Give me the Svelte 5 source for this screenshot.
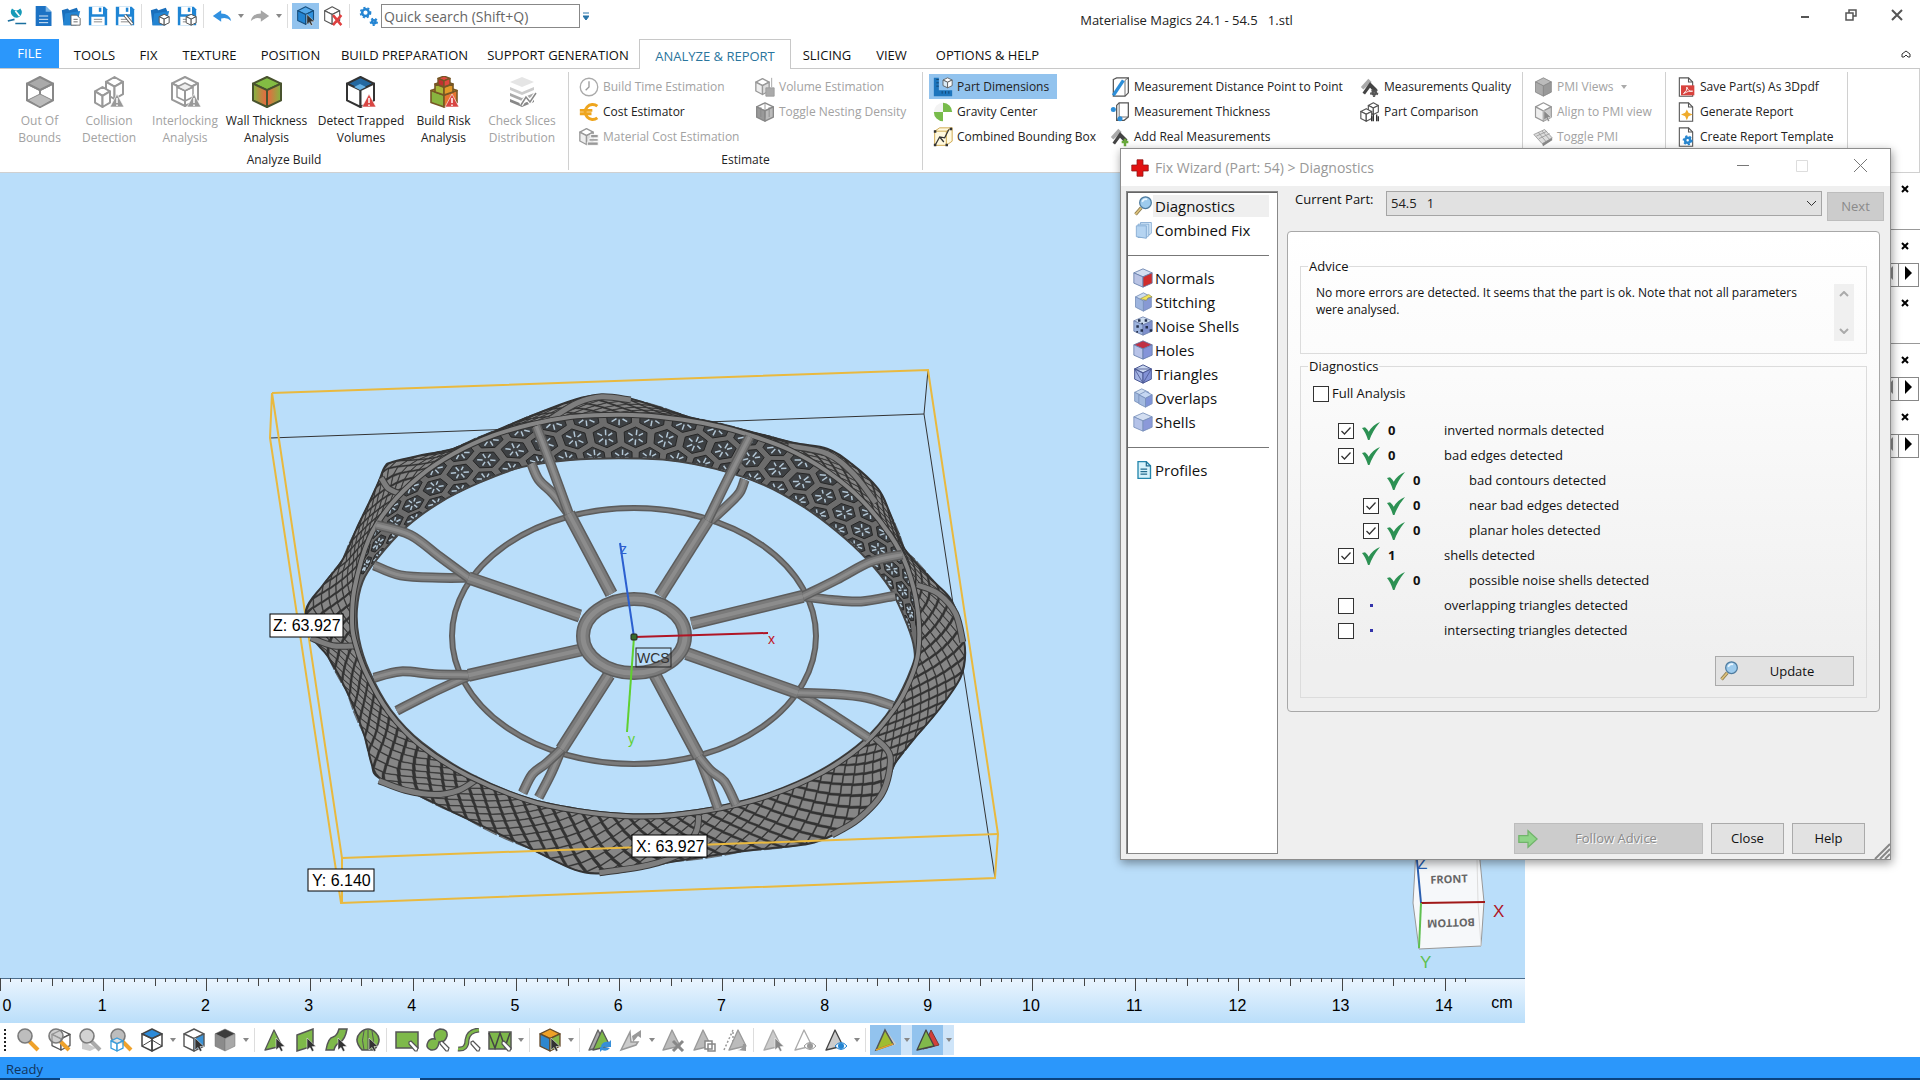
<script lang="ts">
	type Point = [number, number]

	// ---------- icon helpers ----------
	const cube = (x: number, y: number, w: number, h: number, top = '#fff', left = '#fff', right = '#fff', line = '#555', sw = 1.3) => {
		const m = x + w / 2
		const r = x + w
		const a = y + h * 0.22
		const b = y + h * 0.78
		const c = y + h * 0.44
		return `<g stroke="${line}" stroke-width="${sw}" stroke-linejoin="round"><path fill="${top}" d="M${m} ${y}L${r} ${a}L${m} ${c}L${x} ${a}z"/><path fill="${left}" d="M${x} ${a}L${m} ${c}V${y + h}L${x} ${b}z"/><path fill="${right}" d="M${r} ${a}L${m} ${c}V${y + h}L${r} ${b}z"/></g>`
	}
	const tri = (fill: string, line = '#555', dx = 0) =>
		`<path d="M${2 + dx} 22L${11 + dx} 2L${19 + dx} 18z" fill="${fill}" stroke="${line}" stroke-width="1.3" stroke-linejoin="round"/>`
	const cursor = (fill = '#333') => `<path d="M13 10v12l3-2.500 2 4 2-1-2-4h4z" fill="${fill}" stroke="#fff" stroke-width=".5"/>`
	const pen = (line = '#555') => `<path d="M14 14l2-1 7 7-1 3-2 0-6-7z" fill="#fff" stroke="${line}" stroke-width="1.2"/>`
	const warn = (x: number, y: number, fill: string) =>
		`<path d="M${x} ${y}l7 13h-14z" fill="${fill}" stroke="#fff" stroke-width=".6"/><path d="M${x} ${y + 4}v5m0 1.500v1.500" stroke="#fff" stroke-width="1.5"/>`
	const page = (extra: string) =>
		`<path d="M4 1h11l5 5v17H4z" fill="#fff" stroke="#555" stroke-width="1.3"/><path d="M15 1v5h5" fill="none" stroke="#555" stroke-width="1.3"/>${extra}`
	const glass = (fill: string, handle: string) =>
		`<path d="M13 13l9 9" stroke="${handle}" stroke-width="4"/><circle cx="9" cy="8" r="7" fill="${fill}" stroke="#7a7a7a" stroke-width="1.600"/>`
	const floppy = (extra = '') =>
		`<path d="M1 1h19l3 3v19H1z" fill="#1f85d4"/><path d="M5 1h13v9H5zM4 13h16v10H4z" fill="#fff"/><path d="M13 2h3v5h-3z" fill="#1f85d4"/><path d="M7 16h10M7 19h10" stroke="#777"/>${extra}`
	const folder = (extra = '') =>
		`<path d="M1 5l7-2 2 2 9-3 2 5-3 16H3z" fill="#1a6fbc"/><path d="M5 9l18-3-4 17H3z" fill="#2384d2"/>${extra}`
	const gear = (x: number, y: number, r: number, fill: string) =>
		`<circle cx="${x}" cy="${y}" r="${r}" fill="none" stroke="${fill}" stroke-width="3"/><circle cx="${x}" cy="${y}" r="${r + 2}" fill="none" stroke="${fill}" stroke-width="2" stroke-dasharray="2.500 2.500"/>`
	const ruler = '<path d="M1 12L10 2l4 4L4 15z" fill="#aaa"/><path d="M3 19L12 6l9 9-3 4-6-6-6 8z" fill="#444"/>'
	const lens =
		'<path d="M10 14l-7 8" stroke="#8a7a4d" stroke-width="4"/><path d="M10 14l-7 8" stroke="#dcc07b" stroke-width="2"/><circle cx="15" cy="8" r="7" fill="#9dcbed" stroke="#4f7c9f" stroke-width="1.500"/><path d="M11 7q2-4 6-3" fill="none" stroke="#e9f6ff" stroke-width="2"/>'

	const icons: Record<string, string> = {
		logo: '<path d="M6 3q5 5 10 0q4 5-1 10q-5 3-9-2q-3-4 0-8z" fill="#159ab8"/><path d="M10 6l5 6" stroke="#fff" stroke-width="2"/><path d="M1 18l8-2M10 21h13" stroke="#1a6f9f" stroke-width="2"/>',
		new: '<path d="M2 0h12l7 7v17H2z" fill="#1c72c4"/><path d="M14 0v7h7z" fill="#7fb9e8"/><path d="M6 12h11M6 16h11M6 20h11" stroke="#fff"/>',
		open: folder('<path d="M12 11h7l4 4v8H12z" fill="#fff" stroke="#555"/><path d="M15 16h5m-5 3h5" stroke="#555"/>'),
		save: floppy(),
		saveAs: floppy('<path d="M12 11l9 11" stroke="#555" stroke-width="4"/><path d="M12 11l9 11" stroke="#fff" stroke-width="2"/>'),
		openPart: folder(cube(11, 10, 12, 13, '#fff', '#fff', '#fff', '#555', 1.2)),
		savePart: floppy(cube(11, 10, 12, 13, '#fff', '#fff', '#fff', '#555', 1.2)),
		undo: '<path d="M1 12l10-7v4q10 0 12 9q-5-5-12-3v4z" fill="#3191e1"/>',
		redo: '<path d="M23 12L13 5v4Q3 9 1 18q5-5 12-3v4z" fill="#a6a6a6"/>',
		selectPart: cube(2, 1, 19, 21, '#53a8ea', '#2384d2', '#2f91de', '#164e7d') + cursor(),
		unloadPart: cube(2, 1, 18, 21) + '<path d="M12 11l10 12m0-12l-10 12" stroke="#e04040" stroke-width="3"/>',
		gears: gear(9, 8, 4, '#2384d2') + gear(19, 19, 2, '#2384d2'),
		outOf: cube(3, 1, 26, 30, '#aaa', 'none', 'none', '#888', 2) + '<path d="M4 24l12-6 12 6-12 7z" fill="#bbb" stroke="#888"/>',
		collision: cube(13, 1, 17, 22, '#fff', '#fff', '#fff', '#999', 2) + cube(2, 11, 15, 20, '#fff', '#fff', '#fff', '#999', 2) + warn(24, 18, '#999'),
		interlock: cube(3, 1, 26, 29, '#fff', '#fff', '#fff', '#999', 2) + cube(8, 7, 16, 18, '#eee', 'none', 'none', '#999', 1.5) + warn(25, 18, '#999'),
		wall: `<defs><linearGradient id="wl"><stop stop-color="#81b641"/><stop offset="1" stop-color="#ee6540"/></linearGradient><linearGradient id="wr"><stop stop-color="#ee6540"/><stop offset="1" stop-color="#81b641"/></linearGradient></defs>` + cube(2, 1, 28, 30, '#83bd43', 'url(#wl)', 'url(#wr)', '#49532e', 2),
		trapped: cube(2, 1, 27, 30, '#2468a0', '#fff', '#fff', '#333', 2) + '<path d="M15 8l6 3-6 3-6-3z" fill="#66b1e5"/>' + warn(24, 18, '#d84542'),
		risk: cube(3, 10, 26, 21, '#e8ae27', '#89b43f', '#e57531', '#765725', 1.6) + cube(7, 5, 18, 14, '#e8ae27', '#a9b93a', '#e39b29', '#765725', 1.6) + cube(10, 0, 12, 11, '#e04840', '#c03030', '#e04840', '#765725', 1.4) + warn(24, 18, '#d84542'),
		slices: '<path d="M16 1l12 5-12 5L4 6z" fill="#e5e5e5"/><path d="M4 11l12 5 12-5v3l-12 5-12-5z" fill="#ccc"/><path d="M4 17l12 5 12-5v3l-12 5-12-5z" fill="#aaa"/><path d="M4 23l12 5 12-5v3l-12 5-12-5z" fill="#888"/><path d="M15 29l5-8 4 5 6-9" fill="none" stroke="#fff" stroke-width="4"/><path d="M15 29l5-8 4 5 6-9" fill="none" stroke="#888" stroke-width="1.5"/>',
		clock: '<circle cx="12" cy="12" r="10.500" fill="#fff" stroke="#aaa" stroke-width="1.600"/><path d="M12 5v7l-4 4" fill="none" stroke="#999" stroke-width="1.600"/>',
		euro: '<path d="M22 5A9 9 0 1 0 22 19M1 10h15M1 14h14" fill="none" stroke="#eea51d" stroke-width="3.500"/>',
		material: cube(1, 2, 16, 19, '#fff', '#eee', '#ddd', '#999', 1.6) + '<path d="M14 9h9v4h-9zM12 14h11v3H12zM10 18h13v4H10z" fill="#999" stroke="#fff"/>',
		volume: cube(1, 2, 16, 19, '#fff', '#eee', '#ddd', '#999', 1.6) + '<path d="M13 13h10v10H13zM20 1v11" fill="#aaa" stroke="#999"/>',
		nesting: cube(2, 1, 20, 22, '#fff', '#999', '#bbb', '#888', 1.6) + '<path d="M7 6v12m5-16v17m5-13v12" stroke="#888"/>',
		dims: '<path d="M1 1h6v15h16v7H1z" fill="#1d75bd"/><path d="M7 3H4m3 4H4m3 4H4m7 9v-3m4 3v-3m4 3v-3" stroke="#123e66"/>' + cube(12, 1, 11, 12, '#fff', '#d9ebf8', '#fff', '#555', 1),
		gravity: '<path d="M12 12V1A11 11 0 0 0 1 12z" fill="#f3f3f3"/><path d="M12 12V1A11 11 0 0 1 23 12zM12 12v11A11 11 0 0 1 1 12z" fill="#78bb4b"/>',
		bounding: '<path d="M2 5h14v17H2zM2 5l6-4h15v16l-7 5M16 5l7-4" fill="#fff9df" stroke="#c79b35"/><path d="M3 21l5-9 6 1 5-10M8 12l5 6" fill="none" stroke="#333" stroke-width="1.500"/><path d="M1 20h3v3H1zM20 1h3v3h-3zM15 20h3v3h-3zM1 4h3v3H1z" fill="#333"/>',
		distance: '<path d="M4 3l4-2h14v18l-4 4H4z" fill="#fff" stroke="#555" stroke-width="1.500"/><path d="M18 4v19m0-19l4-3" stroke="#555"/><path d="M16 4L4 22" stroke="#2d8ed8" stroke-width="4"/>',
		thickness: '<path d="M8 4l3-3h11v17l-5 4H8z" fill="#fff" stroke="#555" stroke-width="1.500"/><path d="M11 1v17h11M11 18l-3 4" fill="none" stroke="#555"/><circle cx="4" cy="9" r="3" fill="#2d8ed8"/><circle cx="12" cy="20" r="3" fill="#2d8ed8"/>',
		real: ruler + '<path d="M18 23v-9m-4 4h8" stroke="#69aa3b" stroke-width="3"/>',
		quality: ruler + gear(17, 19, 2, '#555'),
		compare: cube(10, 1, 12, 14, '#fff', '#fff', '#fff', '#555', 1.4) + cube(1, 8, 13, 15, '#fff', '#fff', '#fff', '#555', 1.4) + '<path d="M16 15v8m4-8v8m-6-6v6m8-6v6" stroke="#333" stroke-width="1.600"/>',
		pmi: cube(3, 1, 19, 22, '#bbb', '#aaa', '#999', '#888', 1),
		align: cube(3, 1, 19, 22, '#fff', '#eee', '#ccc', '#999', 1.4) + cursor('#888'),
		toggle: '<path d="M1 9l13-6 9 10-12 7z" fill="#ddd" stroke="#999"/><path d="M4 11l13-6M7 14l13-6M6 6l10 12M11 5l9 10" stroke="#999"/><path d="M11 20l12-7v3l-11 7z" fill="#888"/>',
		pdf: page('<path d="M6 10h16v12H6z" fill="#d8433e"/><path d="M9 20q5-4 4-8q2 6 7 5q-5-1-11 3" fill="none" stroke="#fff"/>'),
		report: page('<path d="M13 9l2 4 5 2-5 2-2 5-2-5-5-2 5-2z" fill="#efab2d"/>'),
		template: page(gear(14, 16, 3, '#2786d0')),
		glass: glass('#bdbdbd', '#efa22b'),
		glassPart: cube(5, 2, 18, 20) + glass('#b5b5b5aa', '#efa22b'),
		glassOff: '<path d="M4 13v8l8 2 6-3" fill="#ccc"/>' + glass('#d2d2d2', '#aaa'),
		glassBox: glass('#bdbdbd', '#efa22b') + cube(2, 10, 12, 13, '#fff9', '#fff9', '#fff9', '#3a9ddb', 1.3),
		viewTop: cube(2, 1, 20, 22, '#2c8ad8', 'none', 'none', '#444', 1.5) + '<path d="M2 18l10-6 10 6" fill="none" stroke="#444"/>',
		viewFace: cube(2, 1, 20, 22, '#fff', '#fff', '#3b92d6', '#555', 1.4) + cursor(),
		shade: cube(2, 1, 20, 22, '#3c3c3c', '#8b8b8b', '#a8a8a8', '#777', 0.5),
		markTri: tri('#7eb94a') + cursor(),
		markPlane: '<path d="M3 7l16-6v17L3 23z" fill="#7eb94a" stroke="#555" stroke-width="1.500"/>' + cursor(),
		markSurf: '<path d="M1 22q2-12 7-13q4-1 6-8h8q-2 11-7 13q-5 3-6 8z" fill="#7eb94a" stroke="#555" stroke-width="1.500"/>' + cursor(),
		markShell: '<path d="M6 22Q-3 12 4 5q8-8 16 0q7 7-2 17z" fill="#7eb94a" stroke="#555" stroke-width="1.500"/><path d="M8 22Q5 12 8 3m4 19V2m4 20q3-10 0-19" fill="none" stroke="#555"/>' + cursor(),
		markRect: '<path d="M1 4h22v16H1z" fill="#7eb94a" stroke="#555" stroke-width="1.500"/>' + pen(),
		markBrush: '<path d="M9 11Q6 3 14 1q8 0 7 7q-2 7-8 6q-1 9-8 8q-6-2-3-8q2-4 7-3z" fill="#7eb94a" stroke="#555" stroke-width="1.500"/>' + pen(),
		markLine: '<path d="M1 21q9 1 9-9q1-9 12-10" fill="none" stroke="#555" stroke-width="5"/><path d="M1 21q9 1 9-9q1-9 12-10" fill="none" stroke="#7eb94a" stroke-width="2.500"/>' + pen(),
		markZig: '<path d="M1 4h22v17H1z" fill="#7eb94a" stroke="#555" stroke-width="1.500"/><path d="M1 5l6 15 5-15 5 14 5-14" fill="none" stroke="#444" stroke-width="1.500"/>' + pen(),
		colorCube: cube(2, 1, 20, 22, '#efa127', '#2f87cd', '#85b84b', '#664b2a', 1.3) + cursor(),
		triSwap: tri('#aaa', '#666', -1) + tri('#7eb94a', '#555', 3) + '<path d="M13 18q2-5 8-4l2-2v7h-7l2-2-4 3zM22 20q-3 4-8 2l-2 2v-5" fill="#378fd9"/>',
		triOff: '<path d="M2 22L11 4l1 10 7 0-2 3z" fill="#ccc" stroke="#999" stroke-width="1.500"/><path d="M13 8l9-6v8l-3-2-5 6z" fill="#999"/>',
		triDel: tri('#bbb', '#999') + '<path d="M12 13l10 10m0-10L12 23" stroke="#888" stroke-width="3"/>',
		triCopy: tri('#bbb', '#999') + '<path d="M13 13h7v8h-7zM16 16h7v7h-7z" fill="#fff" stroke="#888" stroke-width="1.500"/>',
		triDup: '<path d="M1 22L10 2v14" fill="none" stroke="#999" stroke-width="1.500" stroke-dasharray="2 2"/>' + tri('#bbb', '#999', 4) + '<path d="M14 22q6 0 6-6h3v7z" fill="#999"/>',
		triSel: tri('#ccc', '#aaa') + cursor('#888'),
		triHide: tri('#fff', '#aaa') + '<path d="M11 18q6-7 12 0q-6 7-12 0z" fill="#fff" stroke="#999"/><circle cx="17" cy="18" r="3" fill="#999"/>',
		triShow: tri('#ccc', '#444') + '<path d="M11 18q6-7 12 0q-6 7-12 0z" fill="#fff" stroke="#2384d2"/><circle cx="17" cy="18" r="3" fill="#2384d2"/>',
		triEdge: '<path d="M12 2l10 14-4 2z" fill="#ccc"/><path d="M2 22L11 2L19 16z" fill="#9fbd31" stroke="#555" stroke-width="1.500"/><path d="M2 22L19 16" stroke="#e5a52b" stroke-width="1.500"/>',
		triBack: '<path d="M7 21L15 2l8 15z" fill="#d33f3a" stroke="#7d3934"/>' + tri('#81b84b', '#444', -1),
		fCombined: '<path d="M9 3h13v13l-3 2H9z" fill="#d8eafb" stroke="#7fa7cf"/><path d="M6 5h13v14l-3 2H6z" fill="#c5dff6" stroke="#7fa7cf"/><path d="M4 7h12v15l-12-2z" fill="#b5d4f1" stroke="#7fa7cf"/>',
		fNormals: cube(1, 1, 22, 22, '#d3def1', '#b9c3e4', '#d02c2c', '#667eab', 1),
		fStitching: cube(3, 1, 19, 22, '#cddcef', '#9db4de', '#8799d4', '#7890ba', 1) + '<path d="M9 8l10-5 4 3-5 1-2 3z" fill="#f2e45b" stroke="#8f8640" stroke-width=".700"/>',
		fNoise: cube(1, 1, 22, 22, '#cddcef', '#9db4de', '#7e90cd', '#7183ad', 1) + '<path d="M6 4h3v3H6zM14 4h3v3h-3zM4 11h3v3H4zM9 16h3v3H9zM15 12h3v3h-3zM20 16h3v3h-3zM10 8h2v2h-2zM4 18h2v2H4z" fill="#24304d"/>',
		fHoles: cube(1, 1, 22, 22, '#c03145', '#b8c3e8', '#8494d9', '#667eab', 1),
		fTriangles: cube(2, 1, 20, 22, '#cbd8f0', '#a4b4e4', '#8292d6', '#4d5a94', 1.2) + '<path d="M2 6l10 17L22 6H2l10 5" fill="none" stroke="#4d5a94"/>',
		fOverlaps: cube(2, 1, 17, 19, '#cddcef', '#a3badf', '#8799d4', '#7890ba', 1) + cube(7, 4, 16, 19, '#c5d7f2', '#a3badf', '#7f93d8', '#7890ba', 1),
		fShells: cube(1, 1, 22, 22, '#d3def1', '#b4c2e8', '#8b99d9', '#7890ba', 1),
		fProfiles: '<path d="M6 2h10l5 5v15H6z" fill="#d6f2fb" stroke="#2486ac" stroke-width="1.600"/><path d="M16 2v5h5M9 11h8M9 14h8M9 17h8" fill="none" stroke="#236b8d" stroke-width="1.500"/>',
		lens,
		cross: '<path d="M8 1h8v7h7v8h-7v7H8v-7H1V8h7z" fill="#e11212" stroke="#8e1515"/>',
		tick: '<path d="M0 8l4-1q3 2 5 6Q14 4 24 0Q14 12 10 24H8Q5 14 0 8z" fill="#2c9153"/>',
		next: '<path d="M1 8h11V2l11 10-11 10v-6H1z" fill="#8fd488" stroke="#71b46b" stroke-width="1.500"/>'
	}

	// ---------- ribbon ----------
	const quickAccess: (string | null)[] = ['logo', 'new', 'open', 'save', 'saveAs', null, 'openPart', 'savePart', null, 'undo', '>', 'redo', '>', null, 'selectPart', 'unloadPart', null, 'gears']

	const tabs = [
		{ name: 'TOOLS', width: 65 },
		{ name: 'FIX', width: 43 },
		{ name: 'TEXTURE', width: 79 },
		{ name: 'POSITION', width: 83 },
		{ name: 'BUILD PREPARATION', width: 145 },
		{ name: 'SUPPORT GENERATION', width: 162 },
		{ name: 'ANALYZE & REPORT', width: 152 },
		{ name: 'SLICING', width: 72 },
		{ name: 'VIEW', width: 57 },
		{ name: 'OPTIONS & HELP', width: 135 }
	]
	let activeTab = $state('ANALYZE & REPORT')

	const analyze = [
		{ icon: 'outOf', lines: ['Out Of', 'Bounds'], width: 57, off: true },
		{ icon: 'collision', lines: ['Collision', 'Detection'], width: 82, off: true },
		{ icon: 'interlock', lines: ['Interlocking', 'Analysis'], width: 70, off: true },
		{ icon: 'wall', lines: ['Wall Thickness', 'Analysis'], width: 93 },
		{ icon: 'trapped', lines: ['Detect Trapped', 'Volumes'], width: 96 },
		{ icon: 'risk', lines: ['Build Risk', 'Analysis'], width: 69 },
		{ icon: 'slices', lines: ['Check Slices', 'Distribution'], width: 88, off: true }
	]

	type Item = { icon: string; text: string; off?: boolean; on?: boolean; menu?: boolean }
	const groups: { label: string; width: number; columns: { width: number; items: Item[] }[] }[] = [
		{
			label: 'Estimate',
			width: 354,
			columns: [
				{
					width: 176,
					items: [
						{ icon: 'clock', text: 'Build Time Estimation', off: true },
						{ icon: 'euro', text: 'Cost Estimator' },
						{ icon: 'material', text: 'Material Cost Estimation', off: true }
					]
				},
				{
					width: 170,
					items: [
						{ icon: 'volume', text: 'Volume Estimation', off: true },
						{ icon: 'nesting', text: 'Toggle Nesting Density', off: true }
					]
				}
			]
		},
		{
			label: '',
			width: 600,
			columns: [
				{
					width: 177,
					items: [
						{ icon: 'dims', text: 'Part Dimensions', on: true },
						{ icon: 'gravity', text: 'Gravity Center' },
						{ icon: 'bounding', text: 'Combined Bounding Box' }
					]
				},
				{
					width: 250,
					items: [
						{ icon: 'distance', text: 'Measurement Distance Point to Point' },
						{ icon: 'thickness', text: 'Measurement Thickness' },
						{ icon: 'real', text: 'Add Real Measurements' }
					]
				},
				{
					width: 164,
					items: [
						{ icon: 'quality', text: 'Measurements Quality' },
						{ icon: 'compare', text: 'Part Comparison' }
					]
				}
			]
		},
		{
			label: '',
			width: 143,
			columns: [
				{
					width: 134,
					items: [
						{ icon: 'pmi', text: 'PMI Views', off: true, menu: true },
						{ icon: 'align', text: 'Align to PMI view', off: true },
						{ icon: 'toggle', text: 'Toggle PMI', off: true }
					]
				}
			]
		},
		{
			label: '',
			width: 182,
			columns: [
				{
					width: 173,
					items: [
						{ icon: 'pdf', text: 'Save Part(s) As 3Dpdf' },
						{ icon: 'report', text: 'Generate Report' },
						{ icon: 'template', text: 'Create Report Template' }
					]
				}
			]
		}
	]

	// ---------- fix wizard ----------
	const fixPages: ({ icon: string; text: string } | null)[] = [
		{ icon: 'lens', text: 'Diagnostics' },
		{ icon: 'fCombined', text: 'Combined Fix' },
		null,
		{ icon: 'fNormals', text: 'Normals' },
		{ icon: 'fStitching', text: 'Stitching' },
		{ icon: 'fNoise', text: 'Noise Shells' },
		{ icon: 'fHoles', text: 'Holes' },
		{ icon: 'fTriangles', text: 'Triangles' },
		{ icon: 'fOverlaps', text: 'Overlaps' },
		{ icon: 'fShells', text: 'Shells' },
		null,
		{ icon: 'fProfiles', text: 'Profiles' }
	]
	let fixPage = $state('Diagnostics')
	let fullAnalysis = $state(false)

	const checks = $state([
		{ text: 'inverted normals detected', count: 0, box: true, checked: true, sub: false },
		{ text: 'bad edges detected', count: 0, box: true, checked: true, sub: false },
		{ text: 'bad contours detected', count: 0, box: false, checked: true, sub: true },
		{ text: 'near bad edges detected', count: 0, box: true, checked: true, sub: true },
		{ text: 'planar holes detected', count: 0, box: true, checked: true, sub: true },
		{ text: 'shells detected', count: 1, box: true, checked: true, sub: false },
		{ text: 'possible noise shells detected', count: 0, box: false, checked: true, sub: true },
		{ text: 'overlapping triangles detected', count: 0, box: true, checked: false, sub: false },
		{ text: 'intersecting triangles detected', count: 0, box: true, checked: false, sub: false }
	])

	const sheets = [false, true, false, true, true]

	// null is a separator, '>' a drop-down arrow
	const tools: (string | null)[] = [
		'glass', 'glassPart', 'glassOff', 'glassBox', 'viewTop', '>', 'viewFace', 'shade', '>', null,
		'markTri', 'markPlane', 'markSurf', 'markShell', null,
		'markRect', 'markBrush', 'markLine', 'markZig', '>', null,
		'colorCube', '>', null,
		'triSwap', 'triOff', '>', 'triDel', 'triCopy', 'triDup', null,
		'triSel', 'triHide', 'triShow', '>', null,
		'triEdge', '>', 'triBack', '>'
	]
	const pressed = ['triEdge', 'triBack', 'selectPart']

	// ---------- ruler ----------
	const CM = 103.2
	const ticks = Array.from({ length: 143 }, (_, i) => ({
		x: Math.round((i * CM) / 10) + 0.5,
		h: i % 10 === 0 ? 13 : i % 5 === 0 ? 8 : 4
	}))
	const numbers = Array.from({ length: 15 }, (_, i) => i)

	// ---------- model ----------
	const project = ([x, y]: Point): Point => [260 + x * 0.4847, 360 + y * 0.3571]
	const fmt = ([x, y]: Point) => `${x.toFixed(1)} ${y.toFixed(1)}`

	function curve(list: Point[], closed = false) {
		const p = list.map(project)
		const n = p.length
		const at = (i: number) => (closed ? p[(i + n) % n] : p[Math.max(0, Math.min(n - 1, i))])
		let d = `M${fmt(p[0])}`
		for (let i = 0; i < (closed ? n : n - 1); i++) {
			const [a, b, c, e] = [at(i - 1), at(i), at(i + 1), at(i + 2)]
			d += `C${fmt([b[0] + (c[0] - a[0]) / 6, b[1] + (c[1] - a[1]) / 6])} ${fmt([c[0] - (e[0] - b[0]) / 6, c[1] - (e[1] - b[1]) / 6])} ${fmt(c)}`
		}
		return closed ? d + 'z' : d
	}

	const outer: Point[] = [
		[665, 105], [705, 98], [765, 108], [885, 160], [1010, 200], [1100, 232], [1170, 248], [1220, 290], [1275, 360],
		[1300, 430], [1330, 530], [1390, 620], [1425, 670], [1445, 740], [1455, 820], [1445, 890], [1400, 980],
		[1350, 1060], [1310, 1130], [1285, 1210], [1240, 1280], [1190, 1325], [1130, 1355], [1000, 1375], [850, 1405],
		[760, 1430], [700, 1438], [650, 1428], [560, 1370], [420, 1280], [320, 1215], [245, 1170], [230, 1130],
		[215, 1050], [180, 930], [140, 830], [110, 780], [95, 700], [130, 630], [170, 560], [200, 470], [225, 400],
		[245, 340], [258, 298], [275, 285], [340, 265], [400, 248], [500, 190], [600, 135]
	]
	const rim: Point[] = [
		[190, 740], [195, 640], [225, 500], [270, 405], [330, 325], [400, 262], [480, 212], [560, 180], [640, 160],
		[710, 154], [790, 155], [870, 167], [950, 187], [1010, 210], [1090, 250], [1170, 312], [1240, 390], [1300, 490],
		[1335, 580], [1357, 700], [1358, 820], [1340, 900], [1310, 975], [1250, 1070], [1160, 1155], [1050, 1220],
		[950, 1255], [850, 1275], [770, 1278], [680, 1268], [560, 1236], [430, 1165], [330, 1078], [265, 985],
		[220, 880], [198, 800]
	]
	const hole: Point[] = [
		[240, 560], [300, 470], [370, 400], [450, 345], [540, 300], [640, 280], [740, 275], [840, 280], [940, 305],
		[1040, 350], [1120, 410], [1190, 480], [1250, 555], [1300, 640], [1335, 740], [1350, 810], [1345, 860],
		[1305, 970], [1245, 1065], [1155, 1150], [1050, 1213], [950, 1249], [850, 1269], [770, 1272], [680, 1262],
		[560, 1230], [435, 1160], [335, 1072], [270, 980], [225, 870], [204, 780], [200, 700], [212, 620]
	]

	function radial(list: Point[]) {
		const polar = list
			.map(([x, y]) => [Math.atan2(y - 770, x - 775), Math.hypot(x - 775, y - 770)])
			.sort((a, b) => a[0] - b[0])
		const first = polar[0]
		const last = polar[polar.length - 1]
		const all = [[last[0] - 2 * Math.PI, last[1]], ...polar, [first[0] + 2 * Math.PI, first[1]]]
		return (t: number) => {
			const a = Math.atan2(Math.sin(t), Math.cos(t))
			const i = Math.max(1, all.findIndex((p) => p[0] >= a))
			const k = (a - all[i - 1][0]) / (all[i][0] - all[i - 1][0] || 1)
			return all[i - 1][1] + k * (all[i][1] - all[i - 1][1])
		}
	}
	const rOuter = radial(outer)
	const rRim = radial(rim)
	const rHole = radial(hole)

	const between = (from: (t: number) => number, to: (t: number) => number, a: number, k: number): Point => {
		const t = Math.max(0, Math.min(1, k))
		const r = from(a) + (to(a) - from(a)) * t
		return project([775 + r * Math.cos(a), 770 + r * Math.sin(a)])
	}

	// diamond lattice on the outside of the wheel
	const CELLS = 100
	const ROWS = 4
	let lattice = ''
	for (let i = 0; i < CELLS; i++) {
		for (let j = 0; j <= ROWS * 2; j++) {
			const u = i + (j % 2) / 2 + j * 0.12
			const v = j / 2 / ROWS
			const q = (du: number, dv: number) => fmt(between(rRim, rOuter, ((u + du) * 2 * Math.PI) / CELLS, v + dv / ROWS))
			lattice += `M${q(-0.43, 0)}L${q(-0.05, -0.43)}L${q(0.43, 0)}L${q(0.05, 0.43)}z`
		}
	}

	// honeycomb on the inside wall
	const HEX = 56
	let combs = ''
	let sparks = ''
	for (let i = 0; i < HEX; i++) {
		for (const [off, v] of [[0, 0.48], [0.5, 0.02], [0.5, 0.94]]) {
			const q = (du: number, dv: number) => fmt(between(rHole, rRim, ((i + off + du) * 2 * Math.PI) / HEX, v + dv))
			const mid = ((i + off) * 2 * Math.PI) / HEX
			if (Math.abs(rRim(mid) - rHole(mid)) < 22) continue
			combs += `M${q(-0.37, -0.12)}L${q(0, -0.24)}L${q(0.37, -0.12)}L${q(0.37, 0.12)}L${q(0, 0.24)}L${q(-0.37, 0.12)}z`
			sparks += `M${q(-0.24, -0.1)}L${q(-0.08, -0.03)}M${q(0.1, 0.04)}L${q(0.24, 0.1)}M${q(-0.02, -0.18)}L${q(0, -0.05)}M${q(0.02, 0.05)}L${q(0.04, 0.18)}M${q(0.24, -0.1)}L${q(0.1, -0.04)}M${q(-0.1, 0.04)}L${q(-0.24, 0.1)}`
		}
	}

	const folds = [
		[[245, 1178], [300, 1205], [360, 1217], [410, 1205], [450, 1172]],
		[[905, 1275], [900, 1320], [870, 1380], [800, 1415], [700, 1436]],
		[[1270, 1060], [1300, 1110], [1285, 1210], [1235, 1285], [1180, 1330]],
		[[1355, 630], [1400, 655], [1435, 710], [1450, 790]],
		[[105, 778], [150, 800], [200, 800]],
		[[250, 330], [265, 360], [290, 375]],
		[[600, 165], [655, 120], [705, 103], [765, 112]],
		[[1090, 240], [1170, 262], [1225, 320], [1270, 400]]
	].map((l) => curve(l as Point[]))

	// every spoke runs straight from the hub to the middle ring and forks there
	const forks = [
		[[637, 430], [605, 375], [575, 335], [560, 290]],
		[[930, 450], [970, 400], [990, 370], [1000, 335]],
		[[1120, 662], [1180, 672], [1240, 676], [1310, 660]],
		[[1110, 932], [1190, 1000], [1255, 1058]],
		[[905, 1110], [925, 1180], [945, 1255]],
		[[622, 1090], [600, 1160], [575, 1225]],
		[[430, 885], [350, 935], [282, 982]],
		[[430, 610], [370, 610], [290, 603], [235, 575]],
		[[637, 430], [602, 300], [570, 185]],
		[[923, 450], [970, 320], [1010, 215]],
		[[1120, 662], [1190, 615], [1260, 565], [1325, 545]],
		[[1110, 932], [1180, 935], [1250, 945], [1305, 968]],
		[[905, 1110], [930, 1150], [958, 1180], [982, 1245]],
		[[622, 1090], [590, 1130], [562, 1160], [542, 1212]],
		[[430, 882], [360, 880], [290, 872], [235, 890]],
		[[430, 610], [370, 550], [310, 490], [240, 462]]
	].map((l) => curve(l as Point[]))
	const spokes = [
		[[725, 655], [637, 430]],
		[[825, 660], [923, 450]],
		[[890, 738], [1120, 662]],
		[[880, 822], [1110, 932]],
		[[815, 882], [905, 1110]],
		[[720, 882], [622, 1090]],
		[[662, 812], [430, 883]],
		[[660, 717], [430, 610]]
	].map((l) => curve(l as Point[]))
</script>

{#snippet icon(name: string, size: number, box = 24)}
	<svg class="icon" width={size} height={size} viewBox="0 0 {box} {box}" aria-hidden="true">{@html icons[name]}</svg>
{/snippet}

{#snippet bar(items: (string | null)[], size: number)}
	{#each items as item}
		{#if item === null}
			<span class="divider"></span>
		{:else if item === '>'}
			<button class="more" aria-label="More"><svg width="6" height="4"><path d="M0 0h6L3 4z" fill="#888" /></svg></button>
		{:else}
			<button class="tool" class:pressed={pressed.includes(item)} aria-label={item}>{@render icon(item, size)}</button>
		{/if}
	{/each}
{/snippet}

<div class="window">
	<header>
		<div class="titlebar">
			<div class="quick">
				{@render bar(quickAccess, 20)}
				<input type="text" placeholder="Quick search (Shift+Q)" aria-label="Quick search" />
				<button class="more" aria-label="Customize"><svg width="6" height="8"><path d="M0 1h6M0 4h6L3 8z" fill="#2874a8" stroke="#2874a8" /></svg></button>
			</div>
			<h1>Materialise Magics 24.1 - 54.5 &nbsp; 1.stl</h1>
			<div class="winbuttons">
				<button aria-label="Minimize"><svg width="12" height="12"><path d="M2 8h8" stroke="#555" stroke-width="2" /></svg></button>
				<button aria-label="Restore"><svg width="12" height="12"><path d="M4 4V1h7v6H8M1 4h7v7H1z" fill="none" stroke="#555" stroke-width="1.500" /></svg></button>
				<button aria-label="Close"><svg width="12" height="12"><path d="M1 1l10 10M11 1L1 11" stroke="#555" stroke-width="2" /></svg></button>
			</div>
		</div>
		<nav>
			<button class="file">FILE</button>
			{#each tabs as tab}
				<button class="tab" class:active={activeTab === tab.name} style:width="{tab.width}px" onclick={() => (activeTab = tab.name)}>{tab.name}</button>
			{/each}
			<button class="collapse" aria-label="Collapse ribbon"><svg width="10" height="8"><path d="M1 4l4-3 4 3v3H7L5 5 3 7H1z" fill="none" stroke="#333" /></svg></button>
		</nav>
		<div class="ribbon">
			<section class="group" style:width="569px">
				<div class="large">
					{#each analyze as item}
						<button disabled={item.off} style:width="{item.width}px">
							{@render icon(item.icon, 32, 32)}
							{#each item.lines as line}<span>{line}</span>{/each}
						</button>
					{/each}
				</div>
				<div class="label">Analyze Build</div>
			</section>
			{#each groups as group}
				<section class="group" style:width="{group.width}px">
					<div class="columns">
						{#each group.columns as column}
							<div style:width="{column.width}px">
								{#each column.items as item}
									<button class="small" class:on={item.on} disabled={item.off}>
										{@render icon(item.icon, 20)}{item.text}
										{#if item.menu}<svg class="caret" width="6" height="4"><path d="M0 0h6L3 4z" fill="#aaa" /></svg>{/if}
									</button>
								{/each}
							</div>
						{/each}
					</div>
					<div class="label">{group.label}</div>
				</section>
			{/each}
		</div>
	</header>

	<main>
		<div class="stage">
			<svg class="scene" viewBox="0 173 1525 805">
				<path d="M270 438L924 414L928 370M924 414L995 878" fill="none" stroke="#333" />
				<path d="M272 393L928 370L998 834L995 878L341 903L270 438L272 393L342 858V903" fill="none" stroke="#e9b93f" stroke-width="2" />

				<path d={curve(outer, true) + curve(hole, true)} fill="#333" fill-rule="evenodd" />
				<path d={lattice} fill="#868686" stroke="#2a2a2a" stroke-width=".500" />
				<path d={curve(rim, true) + curve(hole, true)} fill="#6c6c6c" fill-rule="evenodd" />
				<path d={combs} fill="#3d4043" stroke="#262626" stroke-width="1" />
				<path d={sparks} fill="none" stroke="#b2c6d5" stroke-width="1.500" />
				<path d={curve(outer, true)} fill="none" stroke="#333" stroke-width="2" />
				{#each folds as d}
					<path {d} fill="none" stroke="#3a3a3a" stroke-width="7" />
					<path {d} fill="none" stroke="#7e7e7e" stroke-width="5" />
				{/each}
				<path d={curve(hole, true)} fill="none" stroke="#444" stroke-width="2" />
				<path d={curve(rim, true)} fill="none" stroke="#333" stroke-width="6" />
				<path d={curve(rim, true)} fill="none" stroke="#858585" stroke-width="4" />

				<ellipse class="tube dark" cx="634" cy="636" rx="182" ry="128" stroke-width="6" />
				<ellipse class="tube" cx="634" cy="636" rx="182" ry="128" stroke-width="3" />
				{#each forks as d}
					<path {d} class="tube dark" stroke-width="10" />
					<path {d} class="tube" stroke-width="7" />
					<path {d} class="tube light" stroke-width="3" />
				{/each}
				{#each spokes as d}
					<path {d} class="tube dark" stroke-width="13" />
					<path {d} class="tube" stroke-width="10" />
					<path {d} class="tube light" stroke-width="4" />
				{/each}
				<ellipse class="tube dark" cx="634" cy="636" rx="51" ry="37" stroke-width="14" />
				<ellipse class="tube" cx="634" cy="636" rx="51" ry="37" stroke-width="11" />
				<ellipse class="tube light" cx="634" cy="636" rx="51" ry="37" stroke-width="5" />

				<path d="M342 858L998 834" stroke="#e9b93f" stroke-width="2" />

				<g stroke-width="2" font-size="14">
					<path d="M634 637L620 543" stroke="#2b5fd0" />
					<path d="M634 637L768 633" stroke="#b01525" />
					<path d="M634 637L627 732" stroke="#5fd030" />
					<g stroke="none">
						<text x="620" y="554" fill="#2b5fd0">z</text>
						<text x="768" y="644" fill="#c01525">x</text>
						<text x="628" y="744" fill="#5fd030">y</text>
					</g>
				</g>
				<rect x="631" y="634" width="6" height="6" rx="1" fill="#376b2c" stroke="#222" />
				<rect x="636" y="648" width="35" height="19" fill="none" stroke="#222" />
				<text x="637" y="663" font-size="14" fill="#333">WCS</text>

				<g font-size="16">
					<rect class="tag" x="270" y="614" width="73" height="23" /><text x="273" y="631">Z: 63.927</text>
					<rect class="tag" x="308" y="869" width="66" height="22" /><text x="312" y="886">Y: 6.140</text>
					<rect class="tag" x="632" y="835" width="75" height="22" /><text x="636" y="852">X: 63.927</text>
				</g>

				<path d="M1416 850L1479 850L1484 902L1481 946L1419 949L1413 903z" fill="#f6f8fa" stroke="#999" />
				<path d="M1477 859L1478 902L1481 946" fill="none" stroke="#ddd" />
				<g class="face">
					<text x="1449" y="883" transform="rotate(-2 1449 879)">FRONT</text>
					<text x="1451" y="927" transform="rotate(178 1451 923)">BOTTOM</text>
				</g>
				<path d="M1421 903L1416 850" stroke="#2b5fb0" stroke-width="2" />
				<path d="M1421 903L1485 902" stroke="#a01818" stroke-width="2" />
				<path d="M1421 903L1419 948" stroke="#5fc050" stroke-width="2" />
				<g font-size="17">
					<text x="1417" y="869" fill="#2b5fb0">Z</text>
					<text x="1493" y="917" fill="#b01525">X</text>
					<text x="1420" y="968" fill="#5fc050">Y</text>
				</g>
			</svg>
			<svg class="ruler" width="100%" height="45">
				<path d="M0 .5h3000" stroke="#4b6d8c" />
				{#each ticks as t}
					<path d="M{t.x} 0v{t.h}" stroke="#444" />
				{/each}
				{#each numbers as n}
					<text x={n === 0 ? 7 : n * CM - 1} y="33">{n}</text>
				{/each}
				<text x="1502" y="30">cm</text>
			</svg>
		</div>
		<aside>
			{#each sheets as scroll}
				<div class="sheet" class:scroll>
					<button class="x" aria-label="Close pane"><svg width="8" height="8"><path d="M1 1l6 6M7 1L1 7" stroke="#000" stroke-width="2" /></svg></button>
					{#if scroll}
						<div class="arrows">
							<button aria-label="Scroll left"><svg width="7" height="14"><path d="M7 0v14L0 7z" fill="#888" /></svg></button>
							<button aria-label="Scroll right"><svg width="7" height="14"><path d="M0 0v14l7-7z" /></svg></button>
						</div>
					{/if}
				</div>
			{/each}
		</aside>
	</main>

	<div class="toolbar">
		<span class="grip"></span>
		{@render bar(tools, 24)}
	</div>
	<footer>Ready</footer>
	<div class="taskbar"><span></span></div>

	<div class="dialog" role="dialog" aria-label="Fix Wizard">
		<div class="caption">
			{@render icon('cross', 18)}
			<h2>Fix Wizard (Part: 54) &gt; Diagnostics</h2>
			<button aria-label="Minimize"><svg width="12" height="12"><path d="M0 5.500h12" stroke="#777" /></svg></button>
			<button aria-label="Maximize" disabled><svg width="12" height="12"><path d="M.5.5h11v11H.5z" fill="none" stroke="#ddd" /></svg></button>
			<button aria-label="Close"><svg width="13" height="13"><path d="M0 0l13 13M13 0L0 13" stroke="#777" /></svg></button>
		</div>
		<div class="body">
			<ul>
				{#each fixPages as p}
					{#if p}
						<li>
							<button class:current={fixPage === p.text} onclick={() => (fixPage = p.text)}>{@render icon(p.icon, 20)}<span>{p.text}</span></button>
						</li>
					{:else}
						<li class="rule"></li>
					{/if}
				{/each}
			</ul>
			<div class="content">
				<div class="part">
					<label for="part">Current Part:</label>
					<div class="combo">
						<select id="part"><option>54.5 &nbsp; 1</option></select>
						<svg width="11" height="7"><path d="M1 1l4.500 4.500L10 1" fill="none" stroke="#333" /></svg>
					</div>
					<button class="btn" disabled>Next</button>
				</div>
				<div class="panel">
					<fieldset class="advice">
						<legend>Advice</legend>
						<p>No more errors are detected. It seems that the part is ok. Note that not all parameters were analysed.</p>
						<div class="scrollbar">
							<svg width="10" height="6"><path d="M1 5l4-4 4 4" fill="none" stroke="#aaa" stroke-width="2" /></svg>
							<svg width="10" height="6"><path d="M1 1l4 4 4-4" fill="none" stroke="#aaa" stroke-width="2" /></svg>
						</div>
					</fieldset>
					<fieldset>
						<legend>Diagnostics</legend>
						<label class="full"><input type="checkbox" bind:checked={fullAnalysis} />Full Analysis</label>
						{#each checks as check}
							<label class="check" class:sub={check.sub}>
								{#if check.box}<input type="checkbox" bind:checked={check.checked} />{:else}<i></i>{/if}
								{#if check.checked}
									{@render icon('tick', 18)}<b>{check.count}</b>
								{:else}
									<i class="dot"></i><b></b>
								{/if}
								<span>{check.text}</span>
							</label>
						{/each}
						<button class="btn update">{@render icon('lens', 20)}<span>Update</span></button>
					</fieldset>
				</div>
				<div class="actions">
					<button class="btn follow" disabled>{@render icon('next', 20)}<span>Follow Advice</span></button>
					<button class="btn">Close</button>
					<button class="btn">Help</button>
				</div>
			</div>
		</div>
		<svg class="sizer" width="16" height="16"><path d="M1 16L16 1M6 16L16 6M11 16l5-5" stroke="#888" stroke-width="2" /></svg>
	</div>
</div>

<style>
	:global(body) {
		margin: 0;
		background: #fff;
	}

	.window {
		position: relative;
		display: flex;
		flex-direction: column;
		min-height: 100vh;
		overflow: hidden;
		font: 13px/17px 'Open Sans', 'Noto Sans', sans-serif;
		color: #222;
	}

	button {
		padding: 0;
		border: 0;
		background: none;
		font: inherit;
		color: inherit;
		white-space: nowrap;
	}

	.icon {
		display: block;
		flex: none;
	}

	.titlebar {
		display: flex;
		height: 39px;
	}

	.quick {
		display: flex;
		align-items: center;
		height: 32px;
		padding-left: 3px;
	}

	.quick input {
		box-sizing: border-box;
		width: 199px;
		height: 24px;
		padding: 0 2px;
		border: 1px solid #888;
		font: 14px 'Open Sans', sans-serif;
	}

	.quick input::placeholder {
		color: #666;
	}

	.tool {
		display: grid;
		place-items: center;
		width: 27px;
		height: 26px;
	}

	.pressed {
		background: #92c3ee;
	}

	.more {
		display: grid;
		place-items: center;
		width: 11px;
		height: 24px;
	}

	.divider {
		width: 1px;
		height: 24px;
		margin: 0 4px 0 3px;
		background: #ddd;
	}

	h1 {
		flex: 1;
		margin: 0;
		padding-top: 12px;
		font-size: 13px;
		font-weight: 400;
		line-height: 17px;
		text-align: center;
		white-space: nowrap;
	}

	.winbuttons {
		display: flex;
	}

	.winbuttons button {
		width: 46px;
		height: 32px;
	}

	nav {
		display: flex;
		height: 29px;
		border-bottom: 1px solid #c8c8c8;
		color: #111;
	}

	.file {
		width: 59px;
		margin-right: 3px;
		background: #2b97fb;
		color: #fff;
	}

	.tab {
		padding-top: 4px;
	}

	.tab.active {
		height: 30px;
		border: 1px solid #c8c8c8;
		border-bottom: 0;
		background: #fff;
		color: #2a759d;
	}

	.collapse {
		width: 28px;
		margin-left: auto;
	}

	.ribbon {
		display: flex;
		height: 103px;
		border: solid #d0d0d0;
		border-width: 0 1px 1px 0;
		background: #fff;
		font-size: 12px;
	}

	.group {
		box-sizing: border-box;
		display: flex;
		flex-direction: column;
		flex: none;
		margin: 3px 0 2px;
		border-right: 1px solid #d0d0d0;
	}

	.large {
		display: flex;
		height: 74px;
		padding: 4px 0 0 11px;
	}

	.large button {
		display: flex;
		flex-direction: column;
		align-items: center;
		flex: none;
	}

	.large .icon {
		margin-bottom: 4px;
	}

	button:disabled {
		color: #a2a2a2;
	}

	.columns {
		display: flex;
		height: 74px;
		padding: 2px 0 2px 6px;
	}

	.small {
		display: flex;
		align-items: center;
		gap: 4px;
		height: 25px;
		padding: 0 4px;
	}

	.small.on {
		padding-right: 8px;
		background: #92c3ee;
	}

	.caret {
		margin-left: 4px;
	}

	.label {
		line-height: 20px;
		text-align: center;
	}

	main {
		display: flex;
		flex: 1;
	}

	.stage {
		display: flex;
		flex: 1;
		flex-direction: column;
		background: #badefa;
	}

	.scene {
		display: block;
		flex: 1;
		width: 100%;
		font-family: 'Liberation Sans', Arial, sans-serif;
	}

	.tube {
		fill: none;
		stroke: #7a7a7a;
	}

	.tube.dark {
		stroke: #5c5c5c;
	}

	.tube.light {
		stroke: #8c8c8c;
	}

	.tag {
		fill: #fff;
		stroke: #000;
		stroke-width: 1;
	}

	.face {
		fill: #666;
		font: bold 11px 'Open Sans', sans-serif;
		text-anchor: middle;
	}

	.ruler {
		display: block;
		flex: none;
		background: linear-gradient(#ebf5fe, #badefa);
		font: 16px 'Liberation Sans', Arial, sans-serif;
		text-anchor: middle;
	}

	aside {
		width: 395px;
		flex: none;
		background: #fff;
	}

	.sheet {
		box-sizing: border-box;
		display: flex;
		flex-direction: column;
		align-items: flex-end;
		justify-content: space-between;
		height: 57px;
		border-bottom: 1px solid #999;
	}

	.sheet.scroll {
		border-bottom: 0;
	}

	.x {
		width: 30px;
		height: 30px;
	}

	.arrows {
		display: flex;
		margin-right: 1px;
	}

	.arrows button {
		box-sizing: border-box;
		width: 20px;
		height: 24px;
		border: 1px solid #888;
	}

	.arrows button + button {
		border-left: 0;
	}

	.toolbar {
		display: flex;
		align-items: center;
		height: 34px;
	}

	.toolbar .tool {
		width: 31px;
		height: 30px;
	}

	.toolbar .pressed + .more {
		height: 30px;
		background: #cfe5f9;
	}

	.grip {
		width: 2px;
		height: 22px;
		margin: 0 6px 0 4px;
		background: repeating-linear-gradient(#222 0 2px, #fff 2px 4px);
	}

	footer {
		height: 21px;
		padding-left: 6px;
		background: #2b97fb;
		color: #12345c;
		line-height: 24px;
	}

	.taskbar {
		height: 2px;
		padding-left: 60px;
		background: #0a4380;
	}

	.taskbar span {
		display: block;
		width: 360px;
		height: 2px;
		background: #d5ecff;
	}

	.dialog {
		position: absolute;
		top: 148px;
		right: 29px;
		box-sizing: border-box;
		display: flex;
		flex-direction: column;
		width: 771px;
		min-height: 712px;
		border: 1px solid #8d8d8d;
		background: #efefef;
		box-shadow: 1px 3px 9px rgba(0, 0, 0, 0.4);
		color: #111;
	}

	.caption {
		display: flex;
		align-items: center;
		height: 37px;
		padding-left: 10px;
		background: #fff;
	}

	h2 {
		flex: 1;
		margin: 0 0 0 6px;
		color: #999;
		font-size: 14px;
		font-weight: 400;
	}

	.caption button {
		width: 59px;
		height: 30px;
	}

	.body {
		display: flex;
		flex: 1;
		padding: 5px 6px 5px 5px;
	}

	ul {
		box-sizing: border-box;
		width: 152px;
		margin: 0;
		padding: 3px 8px 0 1px;
		border: 1px solid #888;
		box-shadow: inset 1px 1px #666;
		background: #fff;
		list-style: none;
		font-size: 15px;
	}

	li {
		height: 24px;
	}

	.rule {
		background: linear-gradient(#777, #777) center / 100% 1px no-repeat;
	}

	li button {
		display: flex;
		align-items: center;
		width: 100%;
		padding-left: 5px;
		text-align: left;
	}

	li span {
		flex: 1;
		padding-left: 2px;
		line-height: 22px;
	}

	.current span {
		background: #efefef;
	}

	.content {
		display: flex;
		flex: 1;
		flex-direction: column;
		margin-left: 9px;
	}

	.part {
		display: flex;
		align-items: flex-start;
		height: 40px;
	}

	.part label {
		width: 91px;
		padding-left: 8px;
	}

	.combo {
		position: relative;
		flex: 1;
	}

	.combo svg {
		position: absolute;
		top: 9px;
		right: 5px;
	}

	select {
		appearance: none;
		width: 100%;
		height: 25px;
		padding: 0 4px;
		border: 1px solid #a5a5a5;
		border-radius: 0;
		background: #e1e1e1;
		color: #222;
		font: inherit;
	}

	.btn {
		display: flex;
		align-items: center;
		justify-content: center;
		box-sizing: border-box;
		width: 73px;
		height: 31px;
		border: 1px solid #aaa;
		background: #e2e2e2;
	}

	.btn:disabled {
		border-color: #bdbdbd;
		background: #ccc;
		color: #8a8a8a;
	}

	.btn span {
		flex: 1;
		padding-right: 8px;
		text-align: center;
	}

	.part .btn {
		width: 57px;
		height: 29px;
		margin: 1px 0 0 5px;
	}

	.panel {
		margin-right: 4px;
		padding: 26px 12px 13px;
		border: 1px solid #a8a8a8;
		border-radius: 4px;
		background: linear-gradient(#fff, #fbfbfb 30%, #efefef 90%);
	}

	fieldset {
		margin: 0;
		padding: 7px 12px 11px;
		border: 1px solid #dcdcdc;
	}

	legend {
		margin-left: -5px;
		padding: 0 1px;
		line-height: 16px;
	}

	.advice {
		box-sizing: border-box;
		display: flex;
		justify-content: space-between;
		height: 96px;
		margin-bottom: 4px;
		padding-top: 10px;
	}

	p {
		flex: 1;
		margin: 0 16px 0 3px;
		font-size: 12px;
	}

	.scrollbar {
		display: flex;
		flex-direction: column;
		align-items: center;
		justify-content: space-between;
		box-sizing: border-box;
		width: 20px;
		height: 57px;
		padding: 7px 0;
		background: #f0f0f0;
	}

	input[type='checkbox'] {
		appearance: none;
		box-sizing: border-box;
		width: 16px;
		height: 16px;
		margin: 0;
		border: 1px solid #333;
		background: #fff;
	}

	input[type='checkbox']:checked {
		background: #fff url("data:image/svg+xml,%3Csvg xmlns='http://www.w3.org/2000/svg' viewBox='0 0 14 14'%3E%3Cpath d='M2.500 7l3 3L11.500 3.500' fill='none' stroke='%23333' stroke-width='1.300'/%3E%3C/svg%3E");
	}

	.full {
		display: flex;
		align-items: center;
		gap: 3px;
		height: 25px;
		margin-bottom: 12px;
	}

	.check {
		display: flex;
		align-items: center;
		gap: 8px;
		height: 25px;
		padding-left: 25px;
	}

	.check.sub {
		padding-left: 50px;
	}

	.check i {
		width: 16px;
	}

	.check .dot {
		width: 18px;
		height: 3px;
		background: linear-gradient(#33a, #33a) center / 3px 3px no-repeat;
	}

	.check b {
		width: 48px;
	}

	.update {
		width: 139px;
		height: 30px;
		margin: 13px 0 0 auto;
		padding-left: 3px;
	}

	.actions {
		display: flex;
		justify-content: flex-end;
		gap: 8px;
		margin: auto 19px 0 0;
	}

	.follow {
		width: 189px;
		padding-left: 3px;
		text-shadow: 1px 1px #fff;
	}

	.sizer {
		position: absolute;
		right: 0;
		bottom: 0;
	}
</style>
